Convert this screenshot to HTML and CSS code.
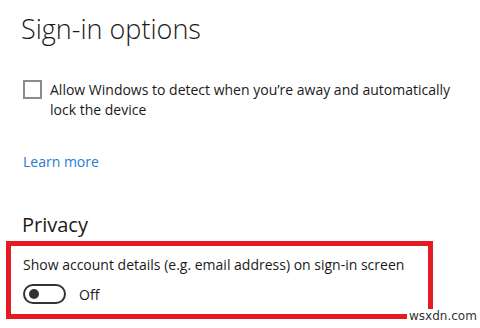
FILE: index.html
```html
<!DOCTYPE html>
<html>
<head>
<meta charset="utf-8">
<link rel="stylesheet" href="styles.css">
</head>
<body>
<div class="page">
  <h1 class="title">Sign-in options</h1>
  <label class="check-row">
    <span class="checkbox"></span>
    <span class="check-text">Allow Windows to detect when you’re away and automatically lock the device</span>
  </label>
  <a class="link" href="#">Learn more</a>
  <h2 class="section">Privacy</h2>
  <div class="highlight">
    <div class="setting-label">Show account details (e.g. email address) on sign-in screen</div>
    <div class="toggle-row">
      <span class="toggle"><span class="knob"></span></span>
      <span class="toggle-text">Off</span>
    </div>
  </div>
</div>
<div class="watermark">wsxdn.com</div>
</body>
</html>
```

FILE: styles.css
```css
html, body {
  margin: 0;
  padding: 0;
  background: #ffffff;
}
body {
  width: 480px;
  height: 328px;
  overflow: hidden;
  position: relative;
  font-family: "Open Sans", "Noto Sans", sans-serif;
  color: #1a1a1a;
}
.page {
  padding: 10px 0 0 0;
}
.title {
  margin: 0 0 0 21px;
  font-size: 27px;
  font-weight: 300;
  line-height: 38px;
  color: #1a1a1a;
}
.check-row {
  display: flex;
  align-items: flex-start;
  gap: 8px;
  margin: 32px 0 0 23px;
}
.checkbox {
  flex: none;
  width: 15px;
  height: 15px;
  border: 2px solid #8c8c8c;
}
.check-text {
  width: 410px;
  font-size: 14px;
  line-height: 20px;
}
.link {
  display: block;
  margin: 32px 0 0 23px;
  font-size: 14px;
  line-height: 20px;
  color: #2a7bd2;
  text-decoration: none;
}
.section {
  margin: 40px 0 0 22px;
  font-size: 20px;
  font-weight: 400;
  line-height: 26px;
}
.highlight {
  margin: 3px 0 0 6px;
  width: 405px;
  height: 68px;
  border: 5px solid #e31b23;
  padding: 0 0 0 12px;
}
.setting-label {
  margin-top: 9px;
  font-size: 14px;
  line-height: 20px;
}
.toggle-row {
  display: flex;
  align-items: center;
  gap: 13px;
  margin-top: 9px;
}
.toggle {
  width: 39px;
  height: 16px;
  border: 2px solid #333;
  border-radius: 10px;
  display: flex;
  align-items: center;
}
.knob {
  width: 10px;
  height: 10px;
  border-radius: 50%;
  background: #333;
  margin-left: 4px;
}
.toggle-text {
  font-size: 14px;
}
.watermark {
  position: absolute;
  left: 407px;
  top: 309px;
  font-family: "DejaVu Sans", sans-serif;
  font-size: 12px;
  color: #333;
  background: #fff;
  padding: 0 2px;
}
```
